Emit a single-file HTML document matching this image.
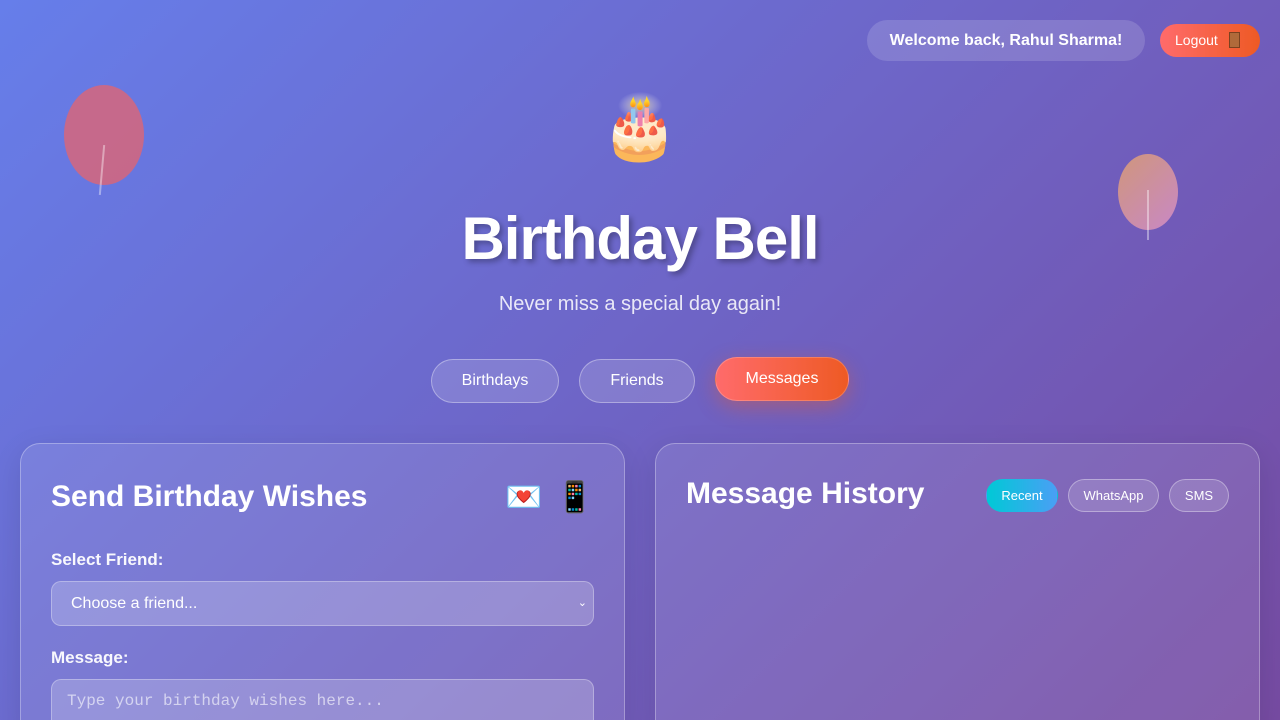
<!DOCTYPE html>
<html><head><meta charset="utf-8"><style>
*{box-sizing:border-box;margin:0;padding:0}
html,body{width:1280px;height:720px;overflow:hidden}
body{font-family:"Liberation Sans",sans-serif;background:linear-gradient(135deg,#667eea 0%,#764ba2 100%);color:#fff;position:relative}
.welcome{position:absolute;left:867px;top:20px;width:278px;height:41px;border-radius:21px;background:rgba(255,255,255,.15);font-weight:bold;font-size:16px;line-height:41px;text-align:center}
.logout{position:absolute;left:1160px;top:24px;width:100px;height:33px;border-radius:17px;background:linear-gradient(90deg,#ff6b6b,#ee5a24);font-size:14px;line-height:33px;padding-left:15px}
.door{position:absolute;right:20px;top:8px;width:11px;height:16px;background:#b06a3a;border:1px solid #7a4220}
.bal{position:absolute;border-radius:50%}
.cake{position:absolute;left:600px;top:88px;width:80px;text-align:center;font-size:62px;line-height:80px;font-family:"Noto Color Emoji",sans-serif}
h1{position:absolute;top:204px;width:100%;text-align:center;font-size:60px;font-weight:bold;text-shadow:3px 3px 6px rgba(0,0,0,.3);letter-spacing:-1px}
.sub{position:absolute;top:293px;width:100%;text-align:center;font-size:20px;color:rgba(255,255,255,.85)}
.tab{position:absolute;top:359px;height:44px;border-radius:22px;border:1px solid rgba(255,255,255,.35);background:rgba(255,255,255,.15);font-size:16px;line-height:42px;text-align:center}
.card{position:absolute;top:443px;width:605px;height:300px;border-radius:20px;border:1px solid rgba(255,255,255,.3);background:rgba(255,255,255,.1);box-shadow:0 8px 30px rgba(0,0,0,.1)}
.card h2{position:absolute;left:30px;font-size:30px;font-weight:bold}
label{position:absolute;left:30px;font-size:17px;font-weight:bold;color:rgba(255,255,255,.95)}
.inp{position:absolute;left:30px;width:543px;height:45px;border-radius:10px;border:1px solid rgba(255,255,255,.3);background:rgba(255,255,255,.2)}
.pill{position:absolute;top:35px;height:33px;border-radius:17px;border:1px solid rgba(255,255,255,.35);background:rgba(255,255,255,.15);font-size:13px;line-height:31px;text-align:center}
.emo{position:absolute;top:36px;font-size:30px;font-family:'Noto Color Emoji',sans-serif;line-height:36px}
</style></head><body>
<div class="bal" style="left:64px;top:85px;width:80px;height:100px;background:rgba(230,100,110,.75)"></div>
<div style="position:absolute;left:101px;top:145px;width:2px;height:50px;background:rgba(255,255,255,.4);transform:rotate(5deg)"></div>
<div class="bal" style="left:1118px;top:154px;width:60px;height:76px;background:linear-gradient(135deg,#e0a070,#d890c8);opacity:.85"></div>
<div style="position:absolute;left:1147px;top:190px;width:2px;height:50px;background:rgba(255,255,255,.4)"></div>
<div class="welcome">Welcome back, Rahul Sharma!</div>
<div class="logout">Logout<div class="door"></div></div>
<div class="cake">🎂</div>
<h1>Birthday Bell</h1>
<div class="sub">Never miss a special day again!</div>
<div class="tab" style="left:431px;width:128px">Birthdays</div>
<div class="tab" style="left:579px;width:116px">Friends</div>
<div class="tab" style="left:715px;top:357px;width:134px;background:linear-gradient(90deg,#ff6b6b,#ee5a24);border-color:rgba(255,255,255,.2);box-shadow:0 6px 20px rgba(238,90,36,.4)">Messages</div>
<div class="card" style="left:20px">
<h2 style="top:36px">Send Birthday Wishes</h2>
<div class="emo" style="left:484px">💌</div>
<div class="emo" style="left:535px">📱</div>
<label style="top:106px">Select Friend:</label>
<div class="inp" style="top:137px;font-size:16px;line-height:43px;padding-left:19px">Choose a friend...<span style="position:absolute;right:6px;font-size:11px">⌄</span></div>
<label style="top:204px">Message:</label>
<div class="inp" style="top:235px;height:80px;font-family:'Liberation Mono',monospace;font-size:16px;padding:12px 15px;color:rgba(255,255,255,.6)">Type your birthday wishes here...</div>
</div>
<div class="card" style="left:655px">
<h2 style="top:33px">Message History</h2>
<div class="pill" style="left:330px;width:72px;background:linear-gradient(90deg,#00c9d6,#4a9ff5);border-color:transparent">Recent</div>
<div class="pill" style="left:412px;width:91px">WhatsApp</div>
<div class="pill" style="left:513px;width:60px">SMS</div>
</div>
</body></html>
